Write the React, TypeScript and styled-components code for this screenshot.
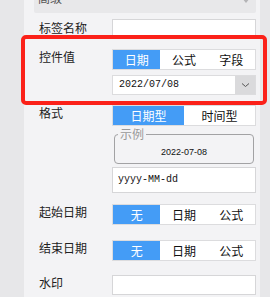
import React from 'react';
import styled, { createGlobalStyle } from 'styled-components';

const GlobalStyle = createGlobalStyle`
  html, body {
    margin: 0;
    padding: 0;
  }
  body {
    width: 270px;
    height: 297px;
    overflow: hidden;
    background: #e7e7e9;
    font-family: 'Noto Sans CJK SC', 'Noto Sans', sans-serif;
    color: #222;
  }
  * {
    box-sizing: border-box;
  }
`;

const Page = styled.div`
  position: relative;
  display: flex;
  height: 297px;
  padding-left: 24px;
`;

const Panel = styled.div`
  width: 236px;
  height: 100%;
  background: #f3f3f5;
  padding: 0 4px 0 10px;
  display: flex;
  flex-direction: column;
`;

const TopSelect = styled.div`
  height: 25px;
  margin-top: -12px;
  background: #e8e8ea;
  border-radius: 2px;
  display: flex;
  align-items: center;
  justify-content: space-between;
  padding: 0 6px 6px 4px;
  font-size: 12px;
  line-height: 12px;
  color: #555;
`;

const Caret = styled.span`
  width: 0;
  height: 0;
  margin-top: 6px;
  border-left: 4px solid transparent;
  border-right: 4px solid transparent;
  border-top: 5px solid #b4b4b6;
`;

const Row = styled.div<{ $mt: number }>`
  display: flex;
  align-items: flex-start;
  margin-top: ${(p) => p.$mt}px;
`;

const Label = styled.div`
  width: 78px;
  flex-shrink: 0;
  padding-left: 5px;
  font-size: 12px;
  line-height: 16px;
  color: #222;
  white-space: nowrap;
`;

const Controls = styled.div`
  width: 144px;
  display: flex;
  flex-direction: column;
`;

const TextInput = styled.div<{ $h: number; $mt?: number }>`
  height: ${(p) => p.$h}px;
  margin-top: ${(p) => p.$mt || 0}px;
  background: #fff;
  border: 1px solid #d6d6d8;
  padding-left: 5px;
  font-family: 'Liberation Mono', 'DejaVu Sans Mono', monospace;
  font-size: 10px;
  line-height: ${(p) => p.$h - 2}px;
  color: #111;
`;

const Segmented = styled.div`
  display: flex;
  height: 21px;
  border: 1px solid #dcdcde;
  background: #fff;
`;

const Segment = styled.div<{ $active?: boolean }>`
  flex: 1;
  text-align: center;
  font-size: 12px;
  line-height: 19px;
  background: ${(p) => (p.$active ? '#449cf6' : '#fff')};
  color: ${(p) => (p.$active ? '#fff' : '#111')};
`;

const DateSelect = styled.div`
  display: flex;
  height: 20px;
  margin-top: 5px;
  border: 1px solid #dcdcde;
  background: #fff;
`;

const DateValue = styled.div`
  flex: 1;
  padding-left: 6px;
  font-family: 'Liberation Mono', 'DejaVu Sans Mono', monospace;
  font-size: 10px;
  line-height: 18px;
  color: #111;
`;

const DropButton = styled.div`
  width: 20px;
  background: #dadadc;
  display: flex;
  align-items: center;
  justify-content: center;
`;

const Example = styled.fieldset`
  margin: 2px 2px 0;
  padding: 0;
  min-width: 0;
  border: 1px solid #a2a2a4;
  border-radius: 4px;
`;

const ExampleLegend = styled.legend`
  margin-left: 3px;
  padding: 0 2px;
  font-size: 12px;
  line-height: 12px;
  color: #999;
`;

const ExampleText = styled.div`
  height: 23px;
  padding-top: 6px;
  text-align: center;
  font-family: 'Liberation Sans', Arial, sans-serif;
  font-size: 9px;
  line-height: 12px;
  color: #111;
`;

const Highlight = styled.div`
  position: absolute;
  left: 21px;
  top: 35px;
  width: 246px;
  height: 70px;
  border: 4px solid #fb2119;
  border-radius: 5px;
  pointer-events: none;
`;

function Chevron() {
  return (
    <svg width="9" height="6" viewBox="0 0 9 6">
      <path d="M1 1.5 L4.5 4.5 L8 1.5" fill="none" stroke="#555" strokeWidth="1" />
    </svg>
  );
}

function App() {
  return (
    <>
      <GlobalStyle />
      <Page>
        <Panel>
          <TopSelect>
            <span>高级</span>
            <Caret />
          </TopSelect>

          <Row $mt={6}>
            <Label style={{ lineHeight: '17px' }}>标签名称</Label>
            <Controls>
              <TextInput $h={17} />
            </Controls>
          </Row>

          <Row $mt={13}>
            <Label>控件值</Label>
            <Controls>
              <Segmented>
                <Segment $active>日期</Segment>
                <Segment>公式</Segment>
                <Segment>字段</Segment>
              </Segmented>
              <DateSelect>
                <DateValue>2022/07/08</DateValue>
                <DropButton>
                  <Chevron />
                </DropButton>
              </DateSelect>
            </Controls>
          </Row>

          <Row $mt={10}>
            <Label>格式</Label>
            <Controls>
              <Segmented>
                <Segment $active>日期型</Segment>
                <Segment>时间型</Segment>
              </Segmented>
              <Example>
                <ExampleLegend>示例</ExampleLegend>
                <ExampleText>2022-07-08</ExampleText>
              </Example>
              <TextInput $h={26} $mt={3}>
                yyyy-MM-dd
              </TextInput>
            </Controls>
          </Row>

          <Row $mt={11}>
            <Label>起始日期</Label>
            <Controls>
              <Segmented>
                <Segment $active>无</Segment>
                <Segment>日期</Segment>
                <Segment>公式</Segment>
              </Segmented>
            </Controls>
          </Row>

          <Row $mt={15}>
            <Label>结束日期</Label>
            <Controls>
              <Segmented>
                <Segment $active>无</Segment>
                <Segment>日期</Segment>
                <Segment>公式</Segment>
              </Segmented>
            </Controls>
          </Row>

          <Row $mt={14}>
            <Label>水印</Label>
            <Controls>
              <TextInput $h={20} />
            </Controls>
          </Row>
        </Panel>
        <Highlight />
      </Page>
    </>
  );
}

export default App;
